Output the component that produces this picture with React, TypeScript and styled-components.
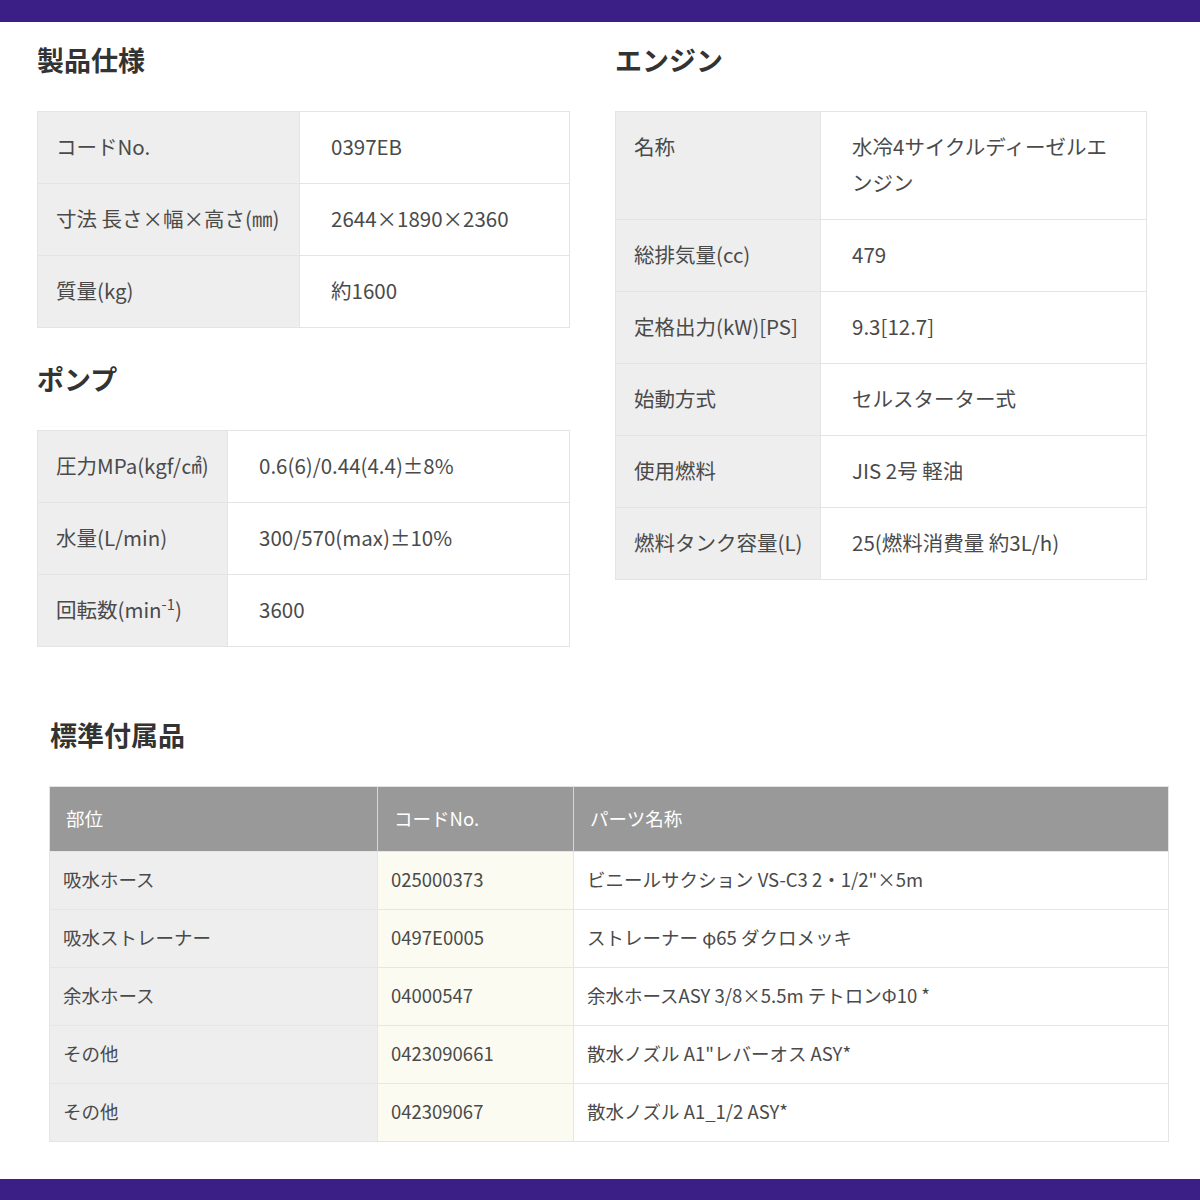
import React from "react";
import styled, { createGlobalStyle } from "styled-components";

const GlobalStyle = createGlobalStyle`
  html, body { margin: 0; padding: 0; background: #ffffff; }
  body {
    font-family: "Noto Sans CJK JP", "Noto Sans", sans-serif;
    color: #444444;
  }
  * { box-sizing: border-box; }
`;

const Page = styled.div`
  display: flex;
  flex-direction: column;
  width: 1200px;
`;

const Bar = styled.div`
  height: 22px;
  background: #3c1f86;
`;

const SpecArea = styled.div`
  display: grid;
  grid-template-columns: 533px 532px;
  column-gap: 45px;
  align-items: start;
  padding: 18px 53px 0 37px;
`;

const Column = styled.div`
  display: flex;
  flex-direction: column;
`;

const Block = styled.section<{ $gap?: number }>`
  display: flex;
  flex-direction: column;
  margin-top: ${(p) => p.$gap ?? 0}px;
`;

const Heading = styled.h2`
  margin: 0 0 31px;
  font-size: 27px;
  line-height: 40px;
  font-weight: 700;
  color: #333333;
`;

const SpecTable = styled.table`
  width: 100%;
  border-collapse: collapse;
  border: 1px solid #e4e4e4;
  table-layout: fixed;
  font-size: 20.5px;
  line-height: 36px;
`;

const Row = styled.tr`
  border-top: 1px solid #e4e4e4;
`;

const Label = styled.th<{ $w: number }>`
  width: ${(p) => p.$w}px;
  background: #eeeeee;
  padding: 16px 12px 19px 18px;
  text-align: left;
  vertical-align: top;
  font-weight: 400;
  color: #4a4a4a;
  border-right: 1px solid #e4e4e4;
  white-space: nowrap;
`;

const Value = styled.td`
  padding: 16px 30px 19px 31px;
  vertical-align: top;
  color: #4a4a4a;
`;

const Sup = styled.sup`
  font-size: 0.72em;
  line-height: 0;
  vertical-align: 0.55em;
`;

const AccArea = styled.section`
  display: flex;
  flex-direction: column;
  padding: 68px 32px 37px 49px;
`;

const AccHeading = styled(Heading)`
  padding-left: 1px;
`;

const AccTable = styled.table`
  width: 1119px;
  border-collapse: collapse;
  table-layout: fixed;
  border: 1px solid #e4e4e4;
  font-size: 18.5px;
  line-height: 32px;
`;

const HeadCell = styled.th<{ $w: number }>`
  width: ${(p) => p.$w}px;
  background: #999999;
  color: #ffffff;
  font-weight: 400;
  text-align: left;
  padding: 15px 16px 17px 16px;
  border-right: 1px solid #d6d6d6;
  &:last-child { border-right: none; }
`;

type Tone = "part" | "code" | "name";

const BodyCell = styled.td<{ $tone: Tone }>`
  padding: 11px 13px 14px 13px;
  color: #4a4a4a;
  white-space: nowrap;
  border-top: 1px solid #e6e6e6;
  border-right: 1px solid #e6e6e6;
  background: ${(p) =>
    p.$tone === "part" ? "#eeeeee" : p.$tone === "code" ? "#fbfbf1" : "#ffffff"};
  &:last-child { border-right: none; }
`;

type SpecRow = { label: React.ReactNode; value: React.ReactNode };

const spec: SpecRow[] = [
  { label: "コードNo.", value: "0397EB" },
  { label: "寸法 長さ×幅×高さ(㎜)", value: "2644×1890×2360" },
  { label: "質量(kg)", value: "約1600" },
];

const pump: SpecRow[] = [
  { label: "圧力MPa(kgf/㎠)", value: "0.6(6)/0.44(4.4)±8%" },
  { label: "水量(L/min)", value: "300/570(max)±10%" },
  {
    label: (
      <>
        回転数(min<Sup>-1</Sup>)
      </>
    ),
    value: "3600",
  },
];

const engine: SpecRow[] = [
  { label: "名称", value: "水冷4サイクルディーゼルエンジン" },
  { label: "総排気量(cc)", value: "479" },
  { label: "定格出力(kW)[PS]", value: "9.3[12.7]" },
  { label: "始動方式", value: "セルスターター式" },
  { label: "使用燃料", value: "JIS 2号 軽油" },
  { label: "燃料タンク容量(L)", value: "25(燃料消費量 約3L/h)" },
];

const accessories = [
  ["吸水ホース", "025000373", "ビニールサクション VS-C3 2・1/2\"×5m"],
  ["吸水ストレーナー", "0497E0005", "ストレーナー φ65 ダクロメッキ"],
  ["余水ホース", "04000547", "余水ホースASY 3/8×5.5m テトロンΦ10 *"],
  ["その他", "0423090661", "散水ノズル A1\"レバーオス ASY*"],
  ["その他", "042309067", "散水ノズル A1_1/2 ASY*"],
];

const Spec: React.FC<{ rows: SpecRow[]; labelWidth: number }> = ({ rows, labelWidth }) => (
  <SpecTable>
    <tbody>
      {rows.map((r, i) => (
        <Row key={i}>
          <Label $w={labelWidth}>{r.label}</Label>
          <Value>{r.value}</Value>
        </Row>
      ))}
    </tbody>
  </SpecTable>
);

export default function App() {
  return (
    <Page>
      <GlobalStyle />
      <Bar />
      <SpecArea>
        <Column>
          <Block>
            <Heading>製品仕様</Heading>
            <Spec rows={spec} labelWidth={262} />
          </Block>
          <Block $gap={31}>
            <Heading>ポンプ</Heading>
            <Spec rows={pump} labelWidth={190} />
          </Block>
        </Column>
        <Column>
          <Block>
            <Heading>エンジン</Heading>
            <Spec rows={engine} labelWidth={205} />
          </Block>
        </Column>
      </SpecArea>
      <AccArea>
        <AccHeading>標準付属品</AccHeading>
        <AccTable>
          <thead>
            <tr>
              <HeadCell $w={328}>部位</HeadCell>
              <HeadCell $w={196}>コードNo.</HeadCell>
              <HeadCell $w={595}>パーツ名称</HeadCell>
            </tr>
          </thead>
          <tbody>
            {accessories.map((a, i) => (
              <tr key={i}>
                <BodyCell $tone="part">{a[0]}</BodyCell>
                <BodyCell $tone="code">{a[1]}</BodyCell>
                <BodyCell $tone="name">{a[2]}</BodyCell>
              </tr>
            ))}
          </tbody>
        </AccTable>
      </AccArea>
      <Bar />
    </Page>
  );
}
